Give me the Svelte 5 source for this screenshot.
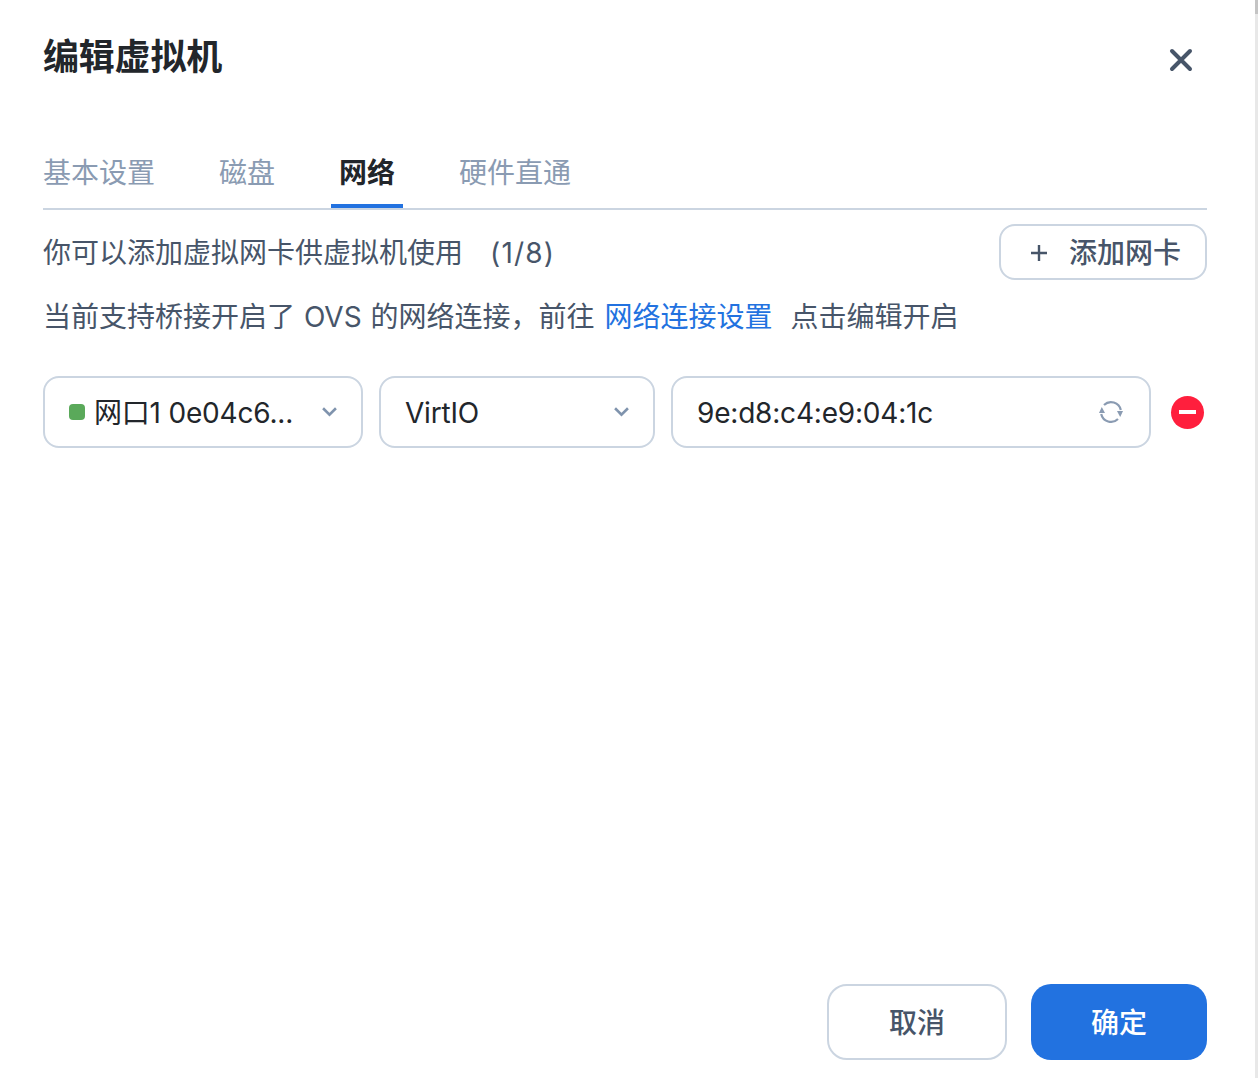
<script lang="ts">
	const tabs = ['基本设置', '磁盘', '网络', '硬件直通'];
	let active = $state(2);
	let mac = $state('9e:d8:c4:e9:04:1c');
</script>

<div class="page">
	<div class="dialog">
		<header class="head">
			<h2>编辑虚拟机</h2>
			<button type="button" class="close" aria-label="关闭">
				<svg viewBox="0 0 24 24" width="24" height="24" fill="none" stroke="#475569" stroke-width="4" stroke-linecap="round">
					<path d="M3 3 21 21M21 3 3 21" />
				</svg>
			</button>
		</header>

		<nav class="tabs">
			{#each tabs as tab, i}
				<button type="button" class="tab" class:active={i === active} onclick={() => (active = i)}>{tab}</button>
			{/each}
		</nav>

		<div class="intro">
			<span class="count-line">你可以添加虚拟网卡供虚拟机使用<span class="count">(1/8)</span></span>
			<button type="button" class="add">
				<svg viewBox="0 0 16 16" width="16" height="16" fill="none" stroke="#475569" stroke-width="2.4">
					<path d="M8 0v16M0 8h16" />
				</svg>
				<span>添加网卡</span>
			</button>
		</div>
		<p class="tip">当前支持桥接开启了 OVS 的网络连接，前往 <a href="#net">网络连接设置</a><span class="after">点击编辑开启</span></p>

		<div class="row">
			<div class="field port">
				<i class="dot"></i>
				<span class="value">网口1 0e04c6...</span>
				<svg class="chev" viewBox="0 0 14 9" width="15" height="10" fill="none" stroke="#7f93ad" stroke-width="2.4">
					<path d="M1 1l6 6 6-6" />
				</svg>
			</div>
			<div class="field model">
				<span class="value">VirtIO</span>
				<svg class="chev" viewBox="0 0 14 9" width="15" height="10" fill="none" stroke="#7f93ad" stroke-width="2.4">
					<path d="M1 1l6 6 6-6" />
				</svg>
			</div>
			<div class="field mac">
				<input class="value" bind:value={mac} />
				<svg viewBox="0 0 24 24" width="24" height="24" fill="none" stroke="#8a9bb2" stroke-width="2.2">
					<path d="M5 5A10 10 0 0 1 21.8 10" />
					<path d="M19 19A10 10 0 0 1 2.2 14" />
					<path d="M18 11 24 11 21.2 17Z" fill="#8a9bb2" stroke="none" />
					<path d="M6 13 0 13 2.8 7Z" fill="#8a9bb2" stroke="none" />
				</svg>
			</div>
			<button type="button" class="remove" aria-label="删除"><i></i></button>
		</div>

		<footer class="foot">
			<button type="button" class="btn cancel">取消</button>
			<button type="button" class="btn ok">确定</button>
		</footer>
	</div>
	<div class="scroll"></div>
</div>

<style>
	:global(body) {
		background: #fff;
	}

	.page {
		display: flex;
		height: 1078px;
		font-family: Inter, 'Noto Sans CJK SC', sans-serif;
		font-size: 28px;
		line-height: 40px;
		color: #475569;
	}

	.dialog {
		display: flex;
		flex-direction: column;
		width: 1164px;
		height: 1060px;
		margin-left: 43px;
	}

	.scroll {
		position: relative;
		width: 3px;
		height: 1078px;
		margin-left: 48px;
		background: #e8e8e8;
	}

	.scroll::before {
		content: '';
		position: absolute;
		top: 0;
		left: 0;
		right: 0;
		height: 14px;
		background: #c4c4c4;
	}

	button {
		font: inherit;
		cursor: pointer;
	}

	.head {
		display: flex;
		justify-content: space-between;
		height: 107px;
	}

	h2 {
		margin: 32px 0 0;
		font-size: 36px;
		line-height: 50px;
		font-weight: 700;
		letter-spacing: -0.2px;
		color: #22262b;
	}

	.close {
		width: 24px;
		height: 24px;
		margin: 48px 14px 0 0;
		padding: 0;
		border: 0;
		background: none;
	}

	.close svg {
		display: block;
	}

	.tabs {
		display: flex;
		align-items: flex-start;
		gap: 64px;
		box-sizing: border-box;
		height: 103px;
		border-bottom: 2px solid #cbd5e1;
	}

	.tab {
		position: relative;
		box-sizing: border-box;
		height: 101px;
		padding: 30px 0 0;
		border: 0;
		background: none;
		line-height: 30px;
		color: #8a9bb2;
	}

	.tab.active {
		font-weight: 700;
		color: #22262b;
	}

	.tab.active::after {
		content: '';
		position: absolute;
		left: -8px;
		right: -8px;
		bottom: 0;
		height: 4px;
		background: #2272e0;
	}

	.intro {
		display: flex;
		justify-content: space-between;
		align-items: center;
		height: 56px;
		margin-top: 14px;
	}

	.count-line {
		padding-top: 2px;
	}

	.count {
		margin-left: 27px;
		letter-spacing: 1.2px;
	}

	.add {
		display: flex;
		align-items: center;
		gap: 22px;
		box-sizing: border-box;
		width: 208px;
		height: 56px;
		padding: 2px 0 0 30px;
		border: 2px solid #cbd5e1;
		border-radius: 16px;
		background: #fff;
		color: #475569;
		font-weight: 500;
	}

	.tip {
		margin: 17px 0 0;
		word-spacing: 1px;
	}

	.tip a {
		margin-left: 1px;
		color: #2272e0;
		text-decoration: none;
	}

	.after {
		margin-left: 18px;
	}

	.row {
		display: flex;
		align-items: center;
		gap: 16px;
		margin-top: 39px;
		color: #22262b;
		letter-spacing: -0.2px;
	}

	.field {
		display: flex;
		align-items: center;
		box-sizing: border-box;
		height: 72px;
		border: 2px solid #cbd5e1;
		border-radius: 16px;
		background: #fff;
	}

	.port {
		width: 320px;
		padding: 0 24px;
	}

	.model {
		width: 276px;
		padding: 0 24px;
	}

	.mac {
		width: 480px;
		padding: 0 26px 0 24px;
	}

	.dot {
		flex: none;
		width: 16px;
		height: 16px;
		margin-right: 9px;
		border-radius: 4px;
		background: #5aa95a;
	}

	.value {
		flex: 1;
		min-width: 0;
		padding-top: 2px;
		white-space: nowrap;
	}

	input.value {
		padding: 2px 0 0;
		border: 0;
		outline: none;
		background: none;
		font: inherit;
		letter-spacing: inherit;
		color: inherit;
	}

	.chev {
		flex: none;
	}

	.remove {
		display: flex;
		align-items: center;
		justify-content: center;
		width: 33px;
		height: 33px;
		margin-left: 4px;
		padding: 0;
		border: 0;
		border-radius: 50%;
		background: #ff1f3d;
	}

	.remove i {
		width: 17px;
		height: 4px;
		background: #fff;
	}

	.foot {
		display: flex;
		justify-content: flex-end;
		gap: 24px;
		margin-top: auto;
	}

	.btn {
		box-sizing: border-box;
		height: 76px;
		padding: 2px 0 0;
		border-radius: 20px;
		font-weight: 500;
	}

	.cancel {
		width: 180px;
		border: 2px solid #cbd5e1;
		background: #fff;
		color: #475569;
	}

	.ok {
		width: 176px;
		border: 0;
		background: #2272e0;
		color: #fff;
	}
</style>
